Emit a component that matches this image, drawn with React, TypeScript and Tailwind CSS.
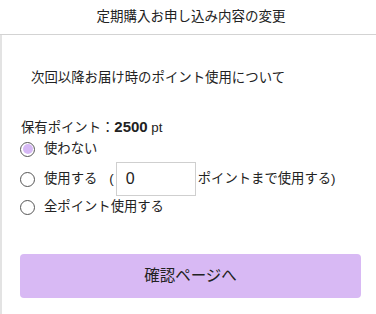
import React from "react";

function Radio({ checked }: { checked?: boolean }) {
  return (
    <span className="w-[15px] h-[15px] rounded-full border border-[#555] flex items-center justify-center shrink-0 bg-white">
      {checked && <span className="w-[10px] h-[10px] rounded-full bg-[#d6b8f5]" />}
    </span>
  );
}

export default function App() {
  return (
    <div
      className="w-[376px] h-[314px] bg-white text-[#222] overflow-hidden"
      style={{ fontFamily: '"Liberation Sans", "Noto Sans CJK JP", sans-serif' }}
    >
      <div className="h-[35px] border-b border-[#d3d3d3] flex items-center justify-center text-[13.5px] pl-[6px]">
        定期購入お申し込み内容の変更
      </div>
      <div className="border-l-2 border-[#e3e3e3] h-[279px] flex flex-col">
        <p className="mt-[33px] pl-[29px] text-[13.4px] leading-[20px]">次回以降お届け時のポイント使用について</p>
        <div className="mt-[29px] pl-[19px] text-[13.33px] leading-[20px] flex items-baseline whitespace-pre">
          <span>保有ポイント：</span>
          <span className="font-bold text-[15px]">2500</span>
          <span> pt</span>
        </div>
        <div className="pl-[18px] flex flex-col text-[13.33px]">
          <div className="h-[22px] flex items-center gap-[9px]">
            <Radio checked />
            <span>使わない</span>
          </div>
          <div className="h-[34px] mt-[2px] flex items-center">
            <Radio />
            <span className="ml-[9px]">使用する</span>
            <span className="ml-[12px]">(</span>
            <div className="ml-[2px] w-[80px] h-[34px] border border-[#cfcfcf] flex items-center pl-[9px] text-[16px]">0</div>
            <span className="ml-[2px]">ポイントまで使用する)</span>
          </div>
          <div className="h-[22px] flex items-center gap-[9px]">
            <Radio />
            <span>全ポイント使用する</span>
          </div>
        </div>
        <div className="mt-[36px] ml-[18px] w-[341px] h-[44px] rounded-[4px] bg-[#d8b9f4] flex items-center justify-center text-[15.5px]">
          確認ページへ
        </div>
      </div>
    </div>
  );
}
